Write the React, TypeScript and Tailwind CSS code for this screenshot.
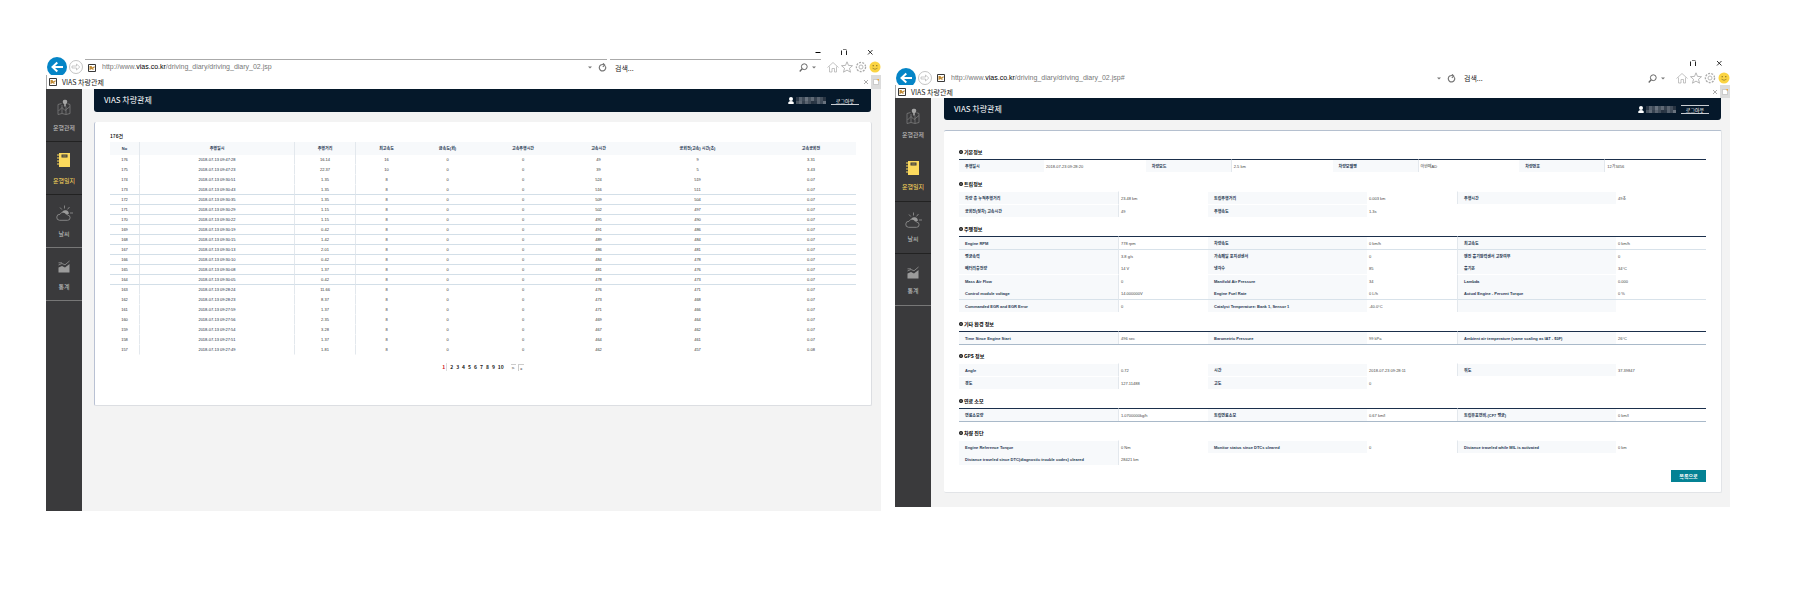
import type { ReactNode } from "react";

const TABLE_COLUMNS = [
  { label: "No", width: "w-[30px]" },
  { label: "주행일시", width: "w-[155px]" },
  { label: "주행거리", width: "w-[61px]" },
  { label: "최고속도", width: "w-[61px]" },
  { label: "급속도(회)", width: "w-[61px]" },
  { label: "고속주행시간", width: "w-[90px]" },
  { label: "고속시간", width: "w-[61px]" },
  { label: "공회전(고속) 시간(초)", width: "w-[137px]" },
  { label: "고속공회전", width: "w-[90px]" },
];

const TRIPS: string[][] = [
  ["176", "2018-07-13 09:47:28", "16.14", "16", "0", "0", "49", "9", "3.31"],
  ["175", "2018-07-13 09:47:23", "22.37", "10", "0", "0", "39", "5", "3.43"],
  ["174", "2018-07-13 09:30:51", "1.35", "8", "0", "0", "524", "519", "0.07"],
  ["173", "2018-07-13 09:30:43", "1.35", "8", "0", "0", "516", "511", "0.07"],
  ["172", "2018-07-13 09:30:35", "1.35", "8", "0", "0", "509", "504", "0.07"],
  ["171", "2018-07-13 09:30:29", "1.15", "8", "0", "0", "502", "497", "0.07"],
  ["170", "2018-07-13 09:30:22", "1.15", "8", "0", "0", "495", "490", "0.07"],
  ["169", "2018-07-13 09:30:19", "0.42", "8", "0", "0", "491", "486", "0.07"],
  ["168", "2018-07-13 09:30:15", "1.42", "8", "0", "0", "489", "484", "0.07"],
  ["167", "2018-07-13 09:30:13", "2.01", "8", "0", "0", "486", "481", "0.07"],
  ["166", "2018-07-13 09:30:10", "0.42", "8", "0", "0", "484", "478", "0.07"],
  ["165", "2018-07-13 09:30:08", "1.37", "8", "0", "0", "481", "476", "0.07"],
  ["164", "2018-07-13 09:30:05", "0.42", "8", "0", "0", "478", "473", "0.07"],
  ["163", "2018-07-13 09:28:24", "11.66", "8", "0", "0", "476", "471", "0.07"],
  ["162", "2018-07-13 09:28:23", "8.37", "8", "0", "0", "473", "468", "0.07"],
  ["161", "2018-07-13 09:27:59", "1.37", "8", "0", "0", "471", "466", "0.07"],
  ["160", "2018-07-13 09:27:56", "2.35", "8", "0", "0", "469", "464", "0.07"],
  ["159", "2018-07-13 09:27:54", "3.28", "8", "0", "0", "467", "462", "0.07"],
  ["158", "2018-07-13 09:27:51", "1.37", "8", "0", "0", "464", "461", "0.07"],
  ["157", "2018-07-13 09:27:49", "1.81", "8", "0", "0", "462", "457", "0.08"],
];

type Rule = "dark" | "light" | "gap" | "none";
type Row = { rule: Rule; cells: string[] };
type Section = { title: string; rows: Row[]; closed?: boolean; quarters?: boolean };

const RULES: Record<Rule, string> = {
  dark: "border-t border-t-[#1b2f4b]",
  light: "border-t border-t-[#d8e2ea]",
  gap: "border-t border-t-transparent",
  none: "",
};

const SECTIONS: Section[] = [
  {
    title: "기본정보",
    quarters: true,
    rows: [
      {
        rule: "dark",
        cells: ["주행일시", "2018-07-23 09:28:20", "차량모드", "2.5 km", "차량모델명", "아반떼AD", "차량번호", "12가3456"],
      },
    ],
  },
  {
    title: "트립정보",
    rows: [
      { rule: "gap", cells: ["차량 총 누적주행거리", "23.48 km", "트립주행거리", "0.003 km", "주행시간", "49초"] },
      { rule: "gap", cells: ["공회전(정차) 고속시간", "49", "주행속도", "1.3s"] },
    ],
  },
  {
    title: "주행정보",
    rows: [
      { rule: "dark", cells: ["Engine RPM", "778 rpm", "차량속도", "0 km/h", "최고속도", "0 km/h"] },
      { rule: "light", cells: ["평균속력", "3.8 g/s", "가속페달 포지션센서", "0", "엔진 흡기압력센서 고장여부", "0"] },
      { rule: "none", cells: ["배터리충전량", "14 V", "냉각수", "85", "흡기온", "34°C"] },
      { rule: "gap", cells: ["Mass Air Flow", "0", "Manifold Air Pressure", "34", "Lambda", "0.000"] },
      {
        rule: "none",
        cells: ["Control module voltage", "14.000000V", "Engine Fuel Rate", "0 L/h", "Actual Engine - Percent Torque", "0 %"],
      },
      {
        rule: "light",
        cells: ["Commanded EGR and EGR Error", "0", "Catalyst Temperature: Bank 1, Sensor 1", "-40.0°C", "", ""],
      },
    ],
  },
  {
    title: "기타 환경 정보",
    closed: true,
    rows: [
      {
        rule: "dark",
        cells: [
          "Time Since Engine Start",
          "496 sec",
          "Barometric Pressure",
          "99 kPa",
          "Ambient air temperature (same scaling as IAT - $0F)",
          "26°C",
        ],
      },
    ],
  },
  {
    title: "GPS 정보",
    rows: [
      { rule: "gap", cells: ["Angle", "0.72", "시간", "2018-07-23 09:28:11", "위도", "37.39847"] },
      { rule: "gap", cells: ["경도", "127.11488", "고도", "0"] },
    ],
  },
  {
    title: "연료 소모",
    closed: true,
    rows: [
      {
        rule: "dark",
        cells: ["연료소모량", "1.0700000kg/h", "트립연료소모", "0.67 km/l", "트립유효연비-(CF7 평균)", "0 km/l"],
      },
    ],
  },
  {
    title: "차량 진단",
    rows: [
      {
        rule: "gap",
        cells: [
          "Engine Reference Torque",
          "0 Nm",
          "Monitor status since DTCs cleared",
          "0",
          "Distance traveled while MIL is activated",
          "0 km",
        ],
      },
      { rule: "none", cells: ["Distance traveled since DTC(diagnostic trouble codes) cleared", "28421 km"] },
    ],
  },
];

function MapIcon() {
  return (
    <svg viewBox="0 0 14 16" className="h-4 w-[14px]" fill="none" stroke="#858585" strokeWidth="0.7">
      <path d="M4.5 4.5 1 5.5v10l4-1 4 1 4-1v-9l-2.5-.8M5 6v8.3M9 7.5v7.8M1.5 12 5 8.5l3 3 5-4" />
      <path d="M7.2 7.5V5A2.2 2.2 0 1 1 8.8 5v2.5z" fill="#a5a5a5" stroke="none" />
      <circle cx="8" cy="2.8" r="2.1" fill="#a5a5a5" stroke="none" />
    </svg>
  );
}

function DiaryIcon() {
  return (
    <svg viewBox="0 0 14 16" className="h-4 w-[14px]">
      <path d="M2 1h11v14H2z" fill="#fbd95d" />
      <path d="M4.500 2.500h6v3h-6z" fill="#3a3a3c" />
      <path d="M5.500 4h4" stroke="#fbd95d" strokeWidth="0.6" />
      <path d="M0 3h2M0 6h2M0 9h2M0 12h2" stroke="#fbd95d" strokeWidth="1" />
    </svg>
  );
}

function WeatherIcon() {
  return (
    <svg viewBox="0 0 18 16" className="h-4 w-[18px]" fill="none" stroke="#8b8b8b" strokeWidth="0.9">
      <path d="M4.5 15.3h8a2.6 2.6 0 0 0 0-5.2A4 4 0 0 0 5 9.3a3 3 0 0 0-.5 6z" />
      <path d="M7 7.2A3.6 3.6 0 0 1 13.8 9c-1.300-.2-2 .2-2.800.6C10.200 8 9 7.300 7 7.200z" fill="#9a9a9a" stroke="none" />
      <path d="M9.500.5v3M5 2.500l1.800 2M14.500 2l-2 2.400M15 8h3" />
    </svg>
  );
}

function StatsIcon() {
  return (
    <svg viewBox="0 0 14 16" className="h-4 w-[14px]">
      <path d="M1.500 9.500 5 8l3 1.500L12.500 6v8.500h-11z" fill="#9b9b9b" />
      <path d="M1.500 7 5 5.500l3 1.300L12.500 3M1.500 4.800H5" fill="none" stroke="#8b8b8b" strokeWidth="0.9" />
    </svg>
  );
}

const MENU: { label: string; icon: ReactNode; active?: boolean }[] = [
  { label: "운행관제", icon: <MapIcon /> },
  { label: "운행일지", icon: <DiaryIcon />, active: true },
  { label: "날씨", icon: <WeatherIcon /> },
  { label: "통계", icon: <StatsIcon /> },
];

function Favicon() {
  return (
    <svg viewBox="0 0 8 8" className="size-2 shrink-0">
      <path d="M.5.5h7v7h-7z" fill="#fff" stroke="#222" strokeWidth="0.9" />
      <path d="M1.500 2h2l1 1.500L6.500 2v1.800l-2 1.200 2 1H5L3.500 5l-2 1.300z" fill="#c08a35" />
    </svg>
  );
}

function CaretIcon() {
  return (
    <svg viewBox="0 0 4 3" className="h-[3px] w-1 shrink-0">
      <path d="M0 .5h4L2 2.500z" fill="#777" />
    </svg>
  );
}

function WindowButtons({ minimize }: { minimize: boolean }) {
  return (
    <div className="flex h-[15px] items-center justify-end gap-[18px] pr-[7px]">
      {minimize && (
        <button aria-label="최소화">
          <svg viewBox="0 0 8 8" className="size-2">
            <path d="M1.500 4.500h5" stroke="#000" />
          </svg>
        </button>
      )}
      <button aria-label="최대화">
        <svg viewBox="0 0 8 8" className="size-2" fill="none" stroke="#222">
          <path d="M1.500 7V2.500M6.500 7V2.500" />
          <path d="M3 1.500h3.500" strokeWidth="0.600" />
        </svg>
      </button>
      <button aria-label="닫기">
        <svg viewBox="0 0 8 8" className="size-2">
          <path d="m2 2 4.500 4.500M6.500 2 2 6.500" stroke="#000" strokeWidth="0.800" />
        </svg>
      </button>
    </div>
  );
}

function NavButtons() {
  return (
    <div className="flex shrink-0 items-center gap-[2px] pl-[1px]">
      <button aria-label="뒤로" className="relative -my-1">
        <svg viewBox="0 0 20 20" className="size-5">
          <circle cx="10" cy="10" r="10" fill="#0585c7" />
          <path d="M16 10H6M10.300 5.500 5.500 10l4.800 4.500" fill="none" stroke="#fff" strokeWidth="2" />
        </svg>
      </button>
      <button aria-label="앞으로">
        <svg viewBox="0 0 14 14" className="size-[14px]" fill="none" stroke="#b5b5b5">
          <circle cx="7" cy="7" r="6.500" strokeWidth="0.800" />
          <path d="M3 6h4.500V4l3.300 3-3.300 3V8H3z" strokeWidth="0.700" />
        </svg>
      </button>
    </div>
  );
}

function ToolIcons() {
  return (
    <div className="flex shrink-0 items-center gap-[2px]">
      <button aria-label="홈">
        <svg viewBox="0 0 12 12" className="size-3" fill="none" stroke="#aaa" strokeWidth="0.700">
          <path d="m.500 6.500 5.500-5 5.500 5M2.500 5.500V11H5V7.500h2.500V11h2V5.500" />
        </svg>
      </button>
      <button aria-label="즐겨찾기">
        <svg viewBox="0 0 12 12" className="size-3" fill="none" stroke="#999" strokeWidth="0.700">
          <path d="m6 .800 1.500 3.600 4 .300-3 2.600 1 3.900L6 9.100l-3.500 2.100 1-3.900-3-2.600 4-.300z" />
        </svg>
      </button>
      <button aria-label="도구">
        <svg viewBox="0 0 12 12" className="size-3" fill="none" stroke="#aaa">
          <circle cx="6" cy="6" r="4.600" strokeWidth="1.300" strokeDasharray="2 1.200" />
          <circle cx="6" cy="6" r="2" strokeWidth="0.800" />
        </svg>
      </button>
      <button aria-label="의견 보내기">
        <svg viewBox="0 0 12 12" className="size-3">
          <circle cx="6" cy="6" r="5.500" fill="#fbd443" />
          <path d="M4.200 4v1.300M7.800 4v1.300" stroke="#6b5a1d" strokeWidth="0.900" />
          <path d="M3.500 7.200q2.500 2.200 5 0" fill="none" stroke="#8a7425" strokeWidth="0.700" />
        </svg>
      </button>
    </div>
  );
}

function AddressBar({ path, lined }: { path: string; lined: boolean }) {
  const line = lined ? "border-[#aaa]" : "border-transparent";
  return (
    <div className={lined ? "flex h-4 items-center" : "flex h-[15px] items-center"}>
      <NavButtons />
      <div className={`ml-[2px] flex h-full min-w-0 flex-[524] items-center border-t pl-[3px] ${line}`}>
        <Favicon />
        <div
          role="textbox"
          aria-label="주소"
          className="ml-[6px] min-w-0 flex-1 truncate pb-px font-['Liberation_Sans','Noto_Sans_CJK_KR',sans-serif] text-[7px] leading-[10px] text-[#777]"
        >
          http://www.<span className="text-black">vias.co.kr</span>
          {path}
        </div>
        <CaretIcon />
        <button aria-label="새로 고침" className="ml-[6px]">
          <svg viewBox="0 0 9 9" className="size-[9px]" fill="none" stroke="#777" strokeWidth="1.200">
            <path d="M5.500 1.700a3.200 3.200 0 1 0 1.800 1.500M5 .300l1.800 1.800L4.800 3.700" />
          </svg>
        </button>
      </div>
      <div className={`ml-[3px] flex h-full min-w-0 flex-[208] items-center border-t pl-[5px] ${line}`}>
        <input
          aria-label="검색"
          placeholder="검색..."
          className="h-[10px] min-w-0 flex-1 bg-transparent text-[7px] leading-[10px] outline-none placeholder:text-[#222]"
        />
        <button aria-label="찾기" className="mr-1">
          <svg viewBox="0 0 9 9" className="size-[9px]" fill="none" stroke="#666">
            <circle cx="5.300" cy="3.700" r="2.900" strokeWidth="1" />
            <path d="M3.200 5.800.700 8.500" strokeWidth="1.300" />
          </svg>
        </button>
        <div className="mr-[5px]">
          <CaretIcon />
        </div>
      </div>
      <div className="ml-[6px]">
        <ToolIcons />
      </div>
    </div>
  );
}

function TabBar({ tall }: { tall: boolean }) {
  return (
    <div className={`relative flex items-center border-l border-[#aaa] bg-white ${tall ? "h-[14px]" : "h-[13px]"}`}>
      <div className="ml-[2px] flex flex-1 items-center gap-[5px]">
        <Favicon />
        <span className="text-[7px] leading-[10px] text-[#222]">VIAS 차량관제</span>
      </div>
      <button aria-label="탭 닫기" className="mr-[3px]">
        <svg viewBox="0 0 4 4" className="size-1">
          <path d="m0 0 4 4M4 0 0 4" stroke="#888" strokeWidth="0.700" />
        </svg>
      </button>
      <button aria-label="새 탭" className="flex h-full w-[10px] items-center justify-center bg-[#dcdcdc]">
        <svg viewBox="0 0 6 6" className="size-[6px]">
          <path d="M.500.500h3.500l1.500 1.500v3.500h-5z" fill="#fff" stroke="#aaa" strokeWidth="0.500" />
          <path d="M3.500 0H6v2z" fill="#f2a93b" />
        </svg>
      </button>
    </div>
  );
}

function Sidebar({ roomy }: { roomy: boolean }) {
  return (
    <nav className="w-9 shrink-0 bg-[#3a3a3c]">
      {MENU.map((item, i) => (
        <a
          key={item.label}
          href="#"
          className={`flex flex-col items-center border-b pt-[10px] text-[6px] leading-[10px] ${
            roomy ? "h-[53px] gap-2" : "h-[52px] gap-[6px]"
          } ${
            i === 3 || (roomy && i === 2) ? "border-[#777]" : !roomy && i === 0 ? "border-transparent" : "border-[#222]"
          } ${item.active ? "text-[#fbd95d]" : "text-[#c4c4c4]"}`}
        >
          {item.icon}
          {item.label}
        </a>
      ))}
    </nav>
  );
}

const MASK = ["#2b3847", "#56616e", "#3f4b59", "#69737f", "#47535f", "#5f6975", "#364250", "#59636f", "#434e5b", "#283442"];

function PageHeader({ boxed }: { boxed: boolean }) {
  return (
    <header
      className={`mr-px flex items-center justify-between rounded-b-[3px] bg-[#05182a] pr-3 pl-[10px] text-white ${
        boxed ? "h-[22px]" : "h-[23px]"
      }`}
    >
      <h1 className="pb-px text-[8px] leading-3">VIAS 차량관제</h1>
      <div className="flex items-center gap-1">
        <div className="flex items-center gap-[2px]">
          <svg viewBox="0 0 6 7" className="h-[7px] w-[6px]" fill="#fff">
            <circle cx="3" cy="2" r="2" />
            <path d="M.300 7V5.500Q.500 4 3 4t2.700 1.500V7z" />
          </svg>
          <svg viewBox="0 0 31 7" className="h-[7px] w-[31px]" role="img" aria-label="사용자">
            {MASK.map((fill, i) => (
              <g key={fill}>
                <rect x={i * 3} y="0" width="3" height="4" fill={fill} />
                <rect x={i * 3} y="4" width="3" height="3" fill={MASK[(i + 4) % 10]} />
              </g>
            ))}
          </svg>
        </div>
        <button
          className={`h-[9px] w-7 border-b border-[#c9cdd2] text-center text-[5px] leading-[7px] ${boxed ? "border-t" : ""}`}
        >
          로그아웃
        </button>
      </div>
    </header>
  );
}

function TripList() {
  return (
    <section className="mt-[10px] rounded-[2px] border-r border-b border-l border-[#dcdee2] border-l-[#b9c1d3] bg-white px-[15px] pt-2 pb-[34px]">
      <h2 className="h-3 pt-px text-[5px] leading-[10px] font-medium text-black">176건</h2>
      <table className="w-full table-fixed border-separate border-spacing-0 text-center font-['Liberation_Sans','Noto_Sans_CJK_KR',sans-serif] text-[4px] leading-[9px] text-[#333]">
        <thead>
          <tr className="bg-[#f7f9fb] text-[#1f3852]">
            {TABLE_COLUMNS.map((col, i) => (
              <th
                key={col.label}
                scope="col"
                className={`h-[13px] p-0 font-bold ${col.width} ${i < 3 ? "border-r border-[#e3e8ed]" : ""}`}
              >
                {col.label}
              </th>
            ))}
          </tr>
        </thead>
        <tbody>
          {TRIPS.map((trip, r) => (
            <tr key={trip[0]}>
              {trip.map((value, i) => (
                <td
                  key={i}
                  className={`h-[10px] border-b p-0 ${r > 2 && r < 13 ? "border-b-[#d3dfe8]" : "border-b-transparent"} ${
                    i < 3 ? "border-r border-r-[#e3e8ed]" : ""
                  } ${i === 1 ? "font-medium text-[#16293d]" : ""}`}
                >
                  {value}
                </td>
              ))}
            </tr>
          ))}
        </tbody>
      </table>
      <nav aria-label="페이지" className="mt-2 flex h-2 items-center justify-center gap-[3px] text-[5px] leading-[8px] font-bold text-[#222]">
        {["1", "2", "3", "4", "5", "6", "7", "8", "9", "10"].map((page) => (
          <a key={page} href="#" className={page === "1" ? "border-r border-[#ddd] pr-px text-[#d0121b]" : ""}>
            {page}
          </a>
        ))}
        <a href="#" className="ml-1 w-[5px] border-t border-[#ccc] text-center text-[5px] leading-[6px] font-normal">
          &gt;
        </a>
        <a href="#" className="-ml-px w-[6px] border-t border-l border-[#ccc] text-center text-[5px] leading-[6px] font-normal">
          »
        </a>
      </nav>
    </section>
  );
}

function InfoSection({ section }: { section: Section }) {
  const { title, rows, closed, quarters } = section;
  return (
    <section>
      <h2 className="flex h-[19px] items-end gap-px pb-[2px] text-[5px] leading-[10px] font-bold text-black">
        <svg viewBox="0 0 4 4" className="mb-[3px] size-1">
          <circle cx="2" cy="2" r="2" fill="#111" />
          <path d="m1.500 1 1 1-1 1" fill="none" stroke="#fff" strokeWidth="0.600" />
        </svg>
        {title}
      </h2>
      <table
        className={`w-full table-fixed border-separate border-spacing-0 text-left font-['Liberation_Sans','Noto_Sans_CJK_KR',sans-serif] text-[4px] leading-[9px] text-[#444] ${
          closed ? "-mb-px border-b border-[#a9b9c9]" : ""
        }`}
      >
        <colgroup>
          {(quarters ? [0, 1, 2, 3] : [0, 1, 2]).flatMap((n) => [
            <col key={`l${n}`} className={quarters ? "w-[85px]" : "w-[159px]"} />,
            <col key={`v${n}`} />,
          ])}
        </colgroup>
        <tbody>
          {rows.map((row, r) => (
            <tr key={r}>
              {row.cells.map((text, i) => {
                const edge = quarters ? i > 2 && i % 2 === 1 : i === 1 || i === 4;
                const side = edge ? "border-l border-l-[#e3e8ed]" : "";
                return i % 2 === 0 ? (
                  <th
                    key={i}
                    scope="row"
                    className={`bg-[#f7f9fb] bg-clip-padding py-0 pr-0 pl-[6px] font-bold whitespace-nowrap text-[#1f3852] ${
                      row.rule === "none" ? "h-3" : "h-[13px]"
                    } ${RULES[row.rule]} ${side}`}
                  >
                    {text}
                  </th>
                ) : (
                  <td key={i} className={`p-0 pl-[2px] whitespace-nowrap ${RULES[row.rule]} ${side}`}>
                    {text}
                  </td>
                );
              })}
            </tr>
          ))}
        </tbody>
      </table>
    </section>
  );
}

function TripDetail() {
  return (
    <section className="mt-[10px] rounded-[2px] border-t border-r border-b border-[#e2e4e7] border-t-[#b5c0cf] bg-white pt-[9px] pr-[15px] pb-[10px] pl-[15px]">
      {SECTIONS.map((section) => (
        <InfoSection key={section.title} section={section} />
      ))}
      <div className="mt-[5px] flex justify-end">
        <button className="h-3 w-[35px] bg-[#048294] text-[5px] leading-3 font-bold text-white">목록으로</button>
      </div>
    </section>
  );
}

export default function App() {
  return (
    <main className="flex min-h-screen items-start gap-[14px] bg-white pr-[67px] pb-[83px] pl-[46px] font-['Noto_Sans_CJK_KR',sans-serif]">
      <div className="min-w-0 flex-1 pt-11">
        <WindowButtons minimize />
        <AddressBar lined path="/driving_diary/driving_diary_02.jsp" />
        <TabBar tall />
        <div className="flex bg-[#f3f3f3]">
          <Sidebar roomy />
          <div className="min-w-0 flex-1 pr-[9px] pb-[105px] pl-3">
            <PageHeader boxed={false} />
            <TripList />
          </div>
        </div>
      </div>
      <div className="min-w-0 flex-1 pt-[55px]">
        <WindowButtons minimize={false} />
        <AddressBar lined={false} path="/driving_diary/driving_diary_02.jsp#" />
        <TabBar tall={false} />
        <div className="flex bg-[#f3f3f3]">
          <Sidebar roomy={false} />
          <div className="min-w-0 flex-1 pr-2 pb-[14px] pl-[13px]">
            <PageHeader boxed />
            <TripDetail />
          </div>
        </div>
      </div>
    </main>
  );
}
